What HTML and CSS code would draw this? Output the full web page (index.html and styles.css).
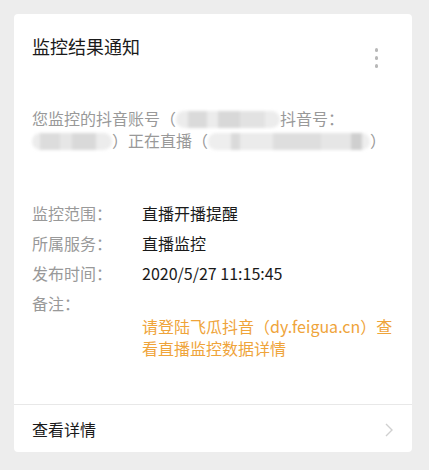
FILE: index.html
```html
<!DOCTYPE html>
<html lang="zh-CN">
<head>
<meta charset="utf-8">
<title>监控结果通知</title>
<link rel="stylesheet" href="styles.css">
</head>
<body>
<div class="card">
  <div class="header">
    <div class="title">监控结果通知</div>
    <div class="more" aria-label="更多">
      <span class="dot"></span><span class="dot"></span><span class="dot"></span>
    </div>
  </div>
  <p class="intro">您监控的抖音账号（<span class="blur blur-a"></span>抖音号：<span class="blur blur-b"></span>）正在直播（<span class="blur blur-c"></span>）</p>
  <div class="fields">
    <div class="label">监控范围：</div><div class="value">直播开播提醒</div>
    <div class="label">所属服务：</div><div class="value">直播监控</div>
    <div class="label">发布时间：</div><div class="value">2020/5/27 11:15:45</div>
    <div class="label note-label">备注：</div><div class="value note-label"></div>
    <div class="label"></div><div class="value note">请登陆飞瓜抖音（dy.feigua.cn）查看直播监控数据详情</div>
  </div>
  <div class="footer">
    <span class="footer-text">查看详情</span>
    <svg class="chevron" width="8" height="14" viewBox="0 0 8 14"><polyline points="1,1 7,7 1,13" fill="none" stroke="#d0d0d0" stroke-width="1.4"/></svg>
  </div>
</div>
</body>
</html>
```
FILE: styles.css
```css
html, body {
  margin: 0;
  padding: 0;
  background: #ededed;
}
body {
  padding: 14px 17px 18px 14px;
  font-family: "Noto Sans CJK SC", "Noto Sans", sans-serif;
}
.card {
  background: #ffffff;
  border-radius: 4px;
  width: 398px;
}
.header {
  display: flex;
  justify-content: space-between;
  align-items: flex-start;
  height: 24px;
  padding: 20px 34px 0 18px;
}
.title {
  font-size: 18px;
  line-height: 24px;
  color: #1a1a1a;
}
.more {
  display: flex;
  flex-direction: column;
  gap: 4.5px;
  margin-top: 14px;
}
.dot {
  width: 3.5px;
  height: 3.5px;
  border-radius: 50%;
  background: #b8b8b8;
}
.intro {
  margin: 49px 16px 0 18px;
  font-size: 16px;
  line-height: 22px;
  color: #999999;
}
.blur {
  display: inline-block;
  height: 17px;
  vertical-align: -3px;
  border-radius: 9px;
  filter: blur(1.5px);
  background-color: #ececec;
}
.blur-a {
  width: 104px;
  background-image: linear-gradient(90deg, #ececec 0 12%, #dadada 12% 30%, #ececec 30% 40%, #d8d8d8 40% 62%, #e2e2e2 62% 86%, #ececec 86%);
}
.blur-b {
  width: 80px;
  background-image: linear-gradient(90deg, #ececec 0 10%, #dcdcdc 10% 35%, #e6e6e6 35% 50%, #d9d9d9 50% 80%, #ececec 80%);
}
.blur-c {
  width: 162px;
  background-image: linear-gradient(90deg, #eeeeee 0 14%, #dadada 14% 20%, #ebebeb 20% 40%, #dedede 40% 70%, #e6e6e6 70% 88%, #cfcfcf 88% 95%, #eeeeee 95%);
}
.fields {
  display: grid;
  grid-template-columns: 110px 1fr;
  row-gap: 8px;
  margin: 51px 16px 0 18px;
  padding-bottom: 45px;
  font-size: 16px;
  line-height: 22px;
}
.label {
  color: #999999;
}
.value {
  color: #1a1a1a;
}
.note-label {
  margin-bottom: -7px;
}
.note {
  color: #efa43a;
}
.footer {
  display: flex;
  justify-content: space-between;
  align-items: center;
  border-top: 1px solid #e8e8e8;
  height: 47px;
  padding: 0 19px 0 18px;
}
.footer-text {
  font-size: 16px;
  color: #1a1a1a;
}
.chevron {
  display: block;
  margin-top: 2px;
}
```
